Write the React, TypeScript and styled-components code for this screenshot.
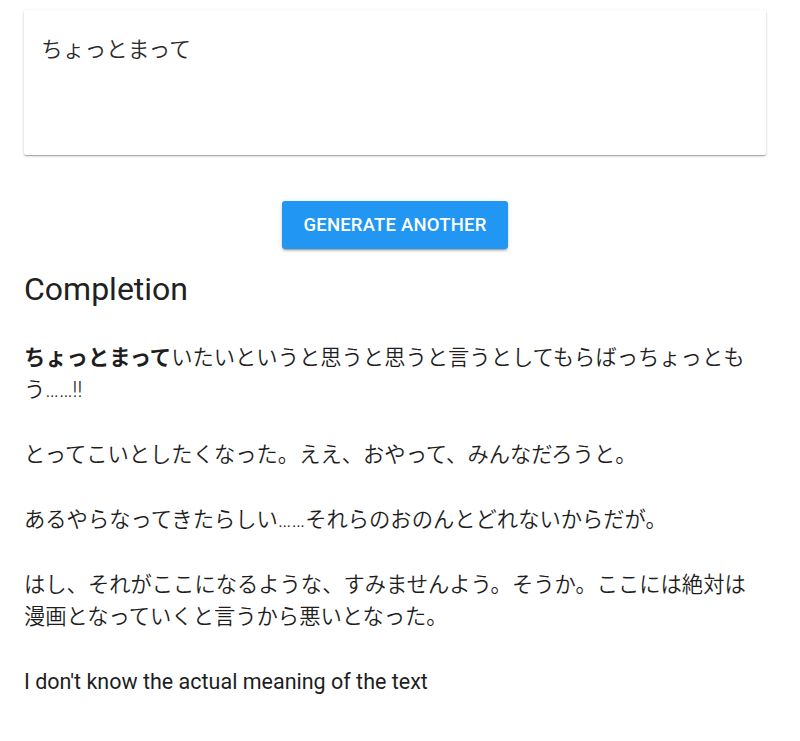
import * as React from "react";
import styled, { createGlobalStyle } from "styled-components";

const GlobalStyle = createGlobalStyle`
  html, body {
    margin: 0;
    padding: 0;
    background: #ffffff;
  }
  body {
    font-family: Roboto, "Noto Sans CJK JP", sans-serif;
    color: #212121;
  }
`;

const Page = styled.div`
  display: flex;
  flex-direction: column;
  align-items: stretch;
  width: 742px;
  padding: 10px 34px 24px 24px;
`;

const PromptCard = styled.div`
  height: 145px;
  box-sizing: border-box;
  padding: 25px 17px;
  background: #ffffff;
  border-radius: 2px;
  box-shadow: 0 1px 3px rgba(0, 0, 0, 0.2), 0 1px 1px rgba(0, 0, 0, 0.14),
    0 2px 1px -1px rgba(0, 0, 0, 0.12);
  font-size: 21.7px;
  font-weight: 350;
  line-height: 30px;
  color: #2a2a2a;
`;

const Actions = styled.div`
  display: flex;
  justify-content: center;
  margin-top: 46px;
`;

const Button = styled.button`
  height: 48px;
  width: 226px;
  border: none;
  border-radius: 3px;
  background: #2196f3;
  color: #ffffff;
  font-family: Roboto, sans-serif;
  font-weight: 500;
  font-size: 18.5px;
  letter-spacing: 0.2px;
  text-transform: uppercase;
  box-shadow: 0 3px 1px -2px rgba(0, 0, 0, 0.2), 0 2px 2px rgba(0, 0, 0, 0.14),
    0 1px 5px rgba(0, 0, 0, 0.12);
  cursor: pointer;
`;

const Heading = styled.h2`
  margin: 18px 0 0;
  font-size: 32px;
  font-weight: 400;
  line-height: 44px;
  color: #212121;
`;

const Body = styled.div`
  margin-top: 31px;
`;

const Paragraph = styled.p<{ $latin?: boolean }>`
  margin: 0 0 33px;
  font-size: ${(p) => (p.$latin ? "21.5px" : "21.3px")};
  line-height: 32px;
  font-weight: ${(p) => (p.$latin ? 400 : 350)};
  color: #1e1e1e;

  strong {
    font-weight: 700;
  }
`;

const App: React.FC = () => {
  const prompt = "ちょっとまって";
  const paragraphs = [
    "とってこいとしたくなった。ええ、おやって、みんなだろうと。",
    "あるやらなってきたらしい……それらのおのんとどれないからだが。",
    "はし、それがここになるような、すみませんよう。そうか。ここには絶対は漫画となっていくと言うから悪いとなった。",
  ];

  return (
    <>
      <GlobalStyle />
      <Page>
        <PromptCard>{prompt}</PromptCard>
        <Actions>
          <Button>Generate another</Button>
        </Actions>
        <Heading>Completion</Heading>
        <Body>
          <Paragraph>
            <strong>{prompt}</strong>
            いたいというと思うと思うと言うとしてもらばっちょっともう……!!
          </Paragraph>
          {paragraphs.map((text, index) => (
            <Paragraph key={index}>{text}</Paragraph>
          ))}
          <Paragraph $latin>I don't know the actual meaning of the text</Paragraph>
        </Body>
      </Page>
    </>
  );
};

export default App;
